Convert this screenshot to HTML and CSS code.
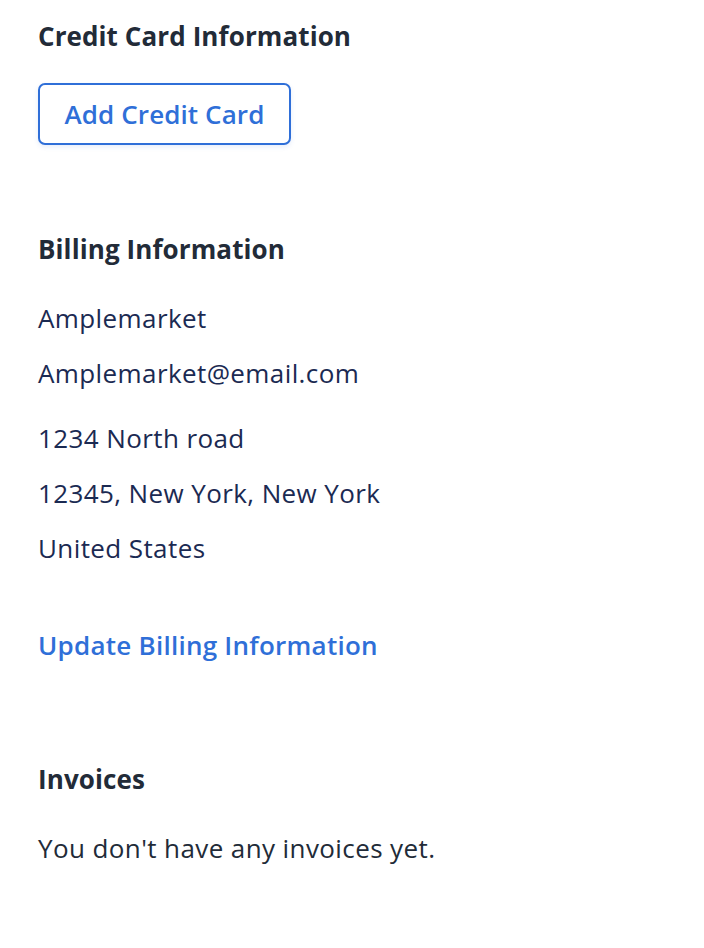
FILE: index.html
```html
<!DOCTYPE html>
<html lang="en">
<head>
<meta charset="utf-8">
<title>Billing</title>
<link rel="stylesheet" href="styles.css">
</head>
<body>
<main class="page">
  <section class="card-section">
    <h2 class="title">Credit Card Information</h2>
    <button class="btn-outline" type="button">Add Credit Card</button>
  </section>

  <section class="billing-section">
    <h2 class="title">Billing Information</h2>
    <div class="info-group">
      <p class="info">Amplemarket</p>
      <p class="info">Amplemarket@email.com</p>
    </div>
    <div class="info-group address">
      <p class="info">1234 North road</p>
      <p class="info">12345, New York, New York</p>
      <p class="info">United States</p>
    </div>
    <a class="link" href="#">Update Billing Information</a>
  </section>

  <section class="invoices-section">
    <h2 class="title">Invoices</h2>
    <p class="empty">You don't have any invoices yet.</p>
  </section>
</main>
</body>
</html>
```
FILE: styles.css
```css
* { box-sizing: border-box; }
html, body { margin: 0; padding: 0; background: #ffffff; }
body {
  font-family: "Open Sans", "Noto Sans", "Liberation Sans", sans-serif;
  -webkit-font-smoothing: antialiased;
}
.page {
  padding: 18px 0 0 38px;
  display: flex;
  flex-direction: column;
}
.title {
  margin: 0;
  font-size: 26px;
  line-height: 36px;
  font-weight: 700;
  color: #222b38;
  letter-spacing: 0.1px;
}
.card-section { display: flex; flex-direction: column; align-items: flex-start; }
.btn-outline {
  margin-top: 29px;
  height: 62px;
  width: 253px;
  border: 2px solid #2f6fd8;
  border-radius: 7px;
  background: #fff;
  color: #2f6fd8;
  font-family: inherit;
  font-size: 26px;
  font-weight: 600;
  letter-spacing: 0.1px;
  padding: 0;
  box-shadow: 0 2px 5px rgba(47, 111, 216, 0.12);
}
.billing-section {
  margin-top: 86px;
  display: flex;
  flex-direction: column;
  align-items: flex-start;
}
.info-group { margin-top: 24px; display: flex; flex-direction: column; }
.info-group.address { margin-top: 10px; }
.info {
  margin: 0;
  font-size: 26px;
  line-height: 55px;
  color: #1b2a52;
  letter-spacing: 0.4px;
}
.link {
  margin-top: 51px;
  font-size: 26px;
  line-height: 36px;
  font-weight: 600;
  color: #2f6fd8;
  text-decoration: none;
  letter-spacing: 0.25px;
}
.invoices-section { margin-top: 98px; }
.empty {
  margin: 24px 0 0;
  font-size: 26px;
  line-height: 55px;
  color: #222b38;
  letter-spacing: 0.4px;
}
```
